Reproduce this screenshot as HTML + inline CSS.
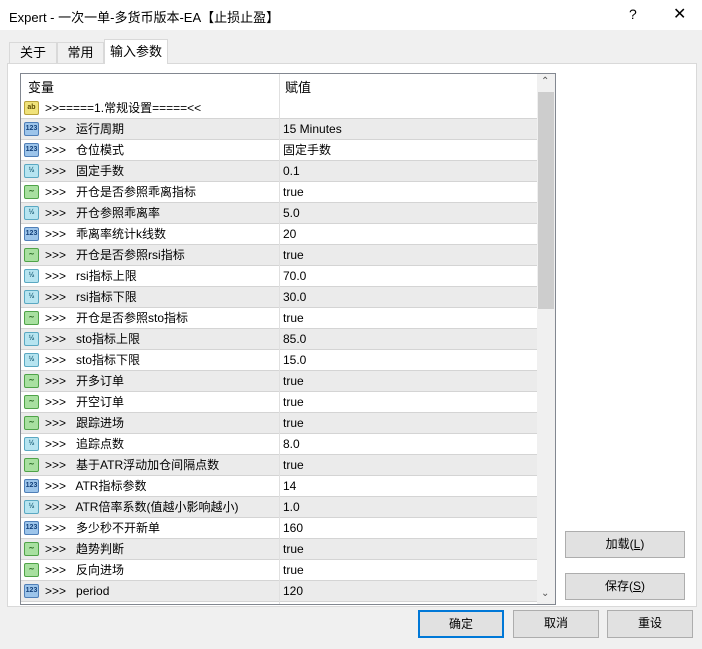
<!DOCTYPE html>
<html><head><meta charset="utf-8"><style>
*{margin:0;padding:0;box-sizing:border-box}
body{width:702px;height:649px;background:#f0f0f0;font-family:"Liberation Sans","Noto Sans CJK SC",sans-serif;font-size:12px;color:#000;position:relative;overflow:hidden}
.abs{position:absolute}
#title{left:0;top:0;width:702px;height:30px;background:#fff}
.tab{top:42px;height:21px;border:1px solid #d9d9d9;border-bottom:none;background:#f0f0f0;font-size:13px;line-height:20px;text-align:center}
#panel{left:7px;top:63px;width:690px;height:544px;background:#fff;border:1px solid #d9d9d9}
#list{left:20px;top:73px;width:536px;height:532px;border:1px solid #828790;background:#fff;overflow:hidden}
.row{position:absolute;left:0;width:516px;height:21px;border-bottom:1px solid #d4d4d4;line-height:20px}
.row.g{background:#ebebeb}
.row .n{position:absolute;left:24px;top:0;white-space:pre}
.row .v{position:absolute;left:262px;top:0}
.ic{position:absolute;left:3px;top:3px;width:15px;height:14px;border-radius:2px;font-size:7px;line-height:12px;text-align:center;font-weight:bold}
.i1{background:#9cc4ea;border:1px solid #4f7fb8;color:#13407a}
.i2{background:#b6e4f0;border:1px solid #5aa8c2;color:#1c5f78}
.i3{background:#a8e0a0;border:1px solid #4fa348;color:#1b5e16}
.i0{background:#f0e27a;border:1px solid #b9a23a;color:#5a4a00}
.btn{background:#e1e1e1;border:1px solid #adadad;text-align:center;line-height:25px;font-size:12px}
</style></head><body>
<div id="title" class="abs"><span class="abs" style="left:9px;top:7px;font-size:13px">Expert - 一次一单-多货币版本-EA【止损止盈】</span><span class="abs" style="left:629px;top:6px;font-size:14px">?</span><span class="abs" style="left:673px;top:4px;font-size:16px">✕</span></div>
<div class="abs tab" style="left:9px;width:48px">关于</div>
<div class="abs tab" style="left:57px;width:47px">常用</div>
<div id="panel" class="abs"></div>
<div class="abs" style="left:104px;top:39px;width:64px;height:25px;background:#fff;border:1px solid #d9d9d9;border-bottom:none;line-height:23px;text-align:center;font-size:13px">输入参数</div>
<div id="list" class="abs">
<div class="abs" style="left:0;top:0;width:516px;height:24px;background:#fff"></div>
<span class="abs" style="left:7px;top:3px;font-size:13px">变量</span><span class="abs" style="left:264px;top:3px;font-size:13px">赋值</span>
<div id="rows"></div>
<div class="abs" style="left:258px;top:0;width:1px;height:532px;background:#e0e0e0;z-index:2"></div>
<div class="abs" style="left:516px;top:0;width:18px;height:530px;background:#f0f0f0"></div>
<div class="abs" style="left:517px;top:18px;width:16px;height:217px;background:#cdcdcd"></div>
<span class="abs" style="left:520px;top:2px;font-size:10px;color:#555">&#8963;</span>
<span class="abs" style="left:520px;top:514px;font-size:10px;color:#555">&#8964;</span>
</div>
<div class="abs btn" style="left:565px;top:531px;width:120px;height:27px">加载(<u>L</u>)</div>
<div class="abs btn" style="left:565px;top:573px;width:120px;height:27px">保存(<u>S</u>)</div>
<div class="abs btn" style="left:418px;top:610px;width:86px;height:28px;border:2px solid #0078d7">确定</div>
<div class="abs btn" style="left:513px;top:610px;width:86px;height:28px">取消</div>
<div class="abs btn" style="left:607px;top:610px;width:86px;height:28px">重设</div>
<script>
var d=[[0,">>=====1.常规设置=====<<",""],[1,"运行周期","15 Minutes"],[1,"仓位模式","固定手数"],[2,"固定手数","0.1"],[3,"开仓是否参照乖离指标","true"],[2,"开仓参照乖离率","5.0"],[1,"乖离率统计k线数","20"],[3,"开仓是否参照rsi指标","true"],[2,"rsi指标上限","70.0"],[2,"rsi指标下限","30.0"],[3,"开仓是否参照sto指标","true"],[2,"sto指标上限","85.0"],[2,"sto指标下限","15.0"],[3,"开多订单","true"],[3,"开空订单","true"],[3,"跟踪进场","true"],[2,"追踪点数","8.0"],[3,"基于ATR浮动加仓间隔点数","true"],[1,"ATR指标参数","14"],[2,"ATR倍率系数(值越小影响越小)","1.0"],[1,"多少秒不开新单","160"],[3,"趋势判断","true"],[3,"反向进场","true"],[1,"period","120"]];
var h="";
d.forEach(function(r,i){var t=24+i*21;var n=i==0?r[1]:">>>   "+r[1];
var il=r[0]==0?"ab":r[0]==1?"123":r[0]==2?"½":"∼";
h+='<div class="row'+(i%2?' g':'')+'" style="top:'+t+'px"><div class="ic i'+r[0]+'">'+il+'</div><span class="n">'+n+'</span><span class="v">'+r[2]+'</span></div>';});
document.getElementById("rows").innerHTML=h;
</script>
</body></html>
